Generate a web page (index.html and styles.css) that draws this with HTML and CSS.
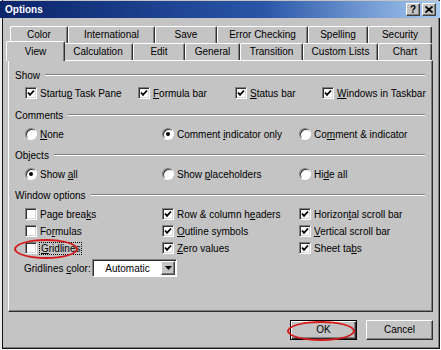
FILE: index.html
```html
<!DOCTYPE html>
<html lang="en">

<head>
    <meta charset="UTF-8">
    <title>Options</title>
    <link rel="stylesheet" href="styles.css">
</head>

<body>
    <div class="dialog">
        <div class="titlebar">
            <span class="title">Options</span>
            <div class="caption_btns">
                <span class="cap_btn help">?</span>
                <span class="cap_btn close">
                    <svg width="8" height="7" viewBox="0 0 8 7"><path d="M0.5 0.5 L7.5 6.5 M7.5 0.5 L0.5 6.5" stroke="#000" stroke-width="1.8"/></svg>
                </span>
            </div>
        </div>

        <div class="tabs">
            <div class="tab_row back">
                <div class="tab">Color</div>
                <div class="tab">International</div>
                <div class="tab">Save</div>
                <div class="tab">Error Checking</div>
                <div class="tab">Spelling</div>
                <div class="tab">Security</div>
            </div>
            <div class="tab_row front">
                <div class="tab active">View</div>
                <div class="tab">Calculation</div>
                <div class="tab">Edit</div>
                <div class="tab">General</div>
                <div class="tab">Transition</div>
                <div class="tab">Custom Lists</div>
                <div class="tab">Chart</div>
            </div>
        </div>

        <div class="panel">
            <!-- Show -->
            <div class="group_title"><span>Show</span><i class="rule"></i></div>
            <div class="opts show_opts">
                <label class="opt"><span class="check"><svg width="10" height="10" viewBox="0 0 10 10"><path d="M2 4.5 L4 6.8 L8 2.5" fill="none" stroke="#000" stroke-width="1.8"/></svg></span><span>Startu<u>p</u> Task Pane</span></label>
                <label class="opt"><span class="check"><svg width="10" height="10" viewBox="0 0 10 10"><path d="M2 4.5 L4 6.8 L8 2.5" fill="none" stroke="#000" stroke-width="1.8"/></svg></span><span><u>F</u>ormula bar</span></label>
                <label class="opt"><span class="check"><svg width="10" height="10" viewBox="0 0 10 10"><path d="M2 4.5 L4 6.8 L8 2.5" fill="none" stroke="#000" stroke-width="1.8"/></svg></span><span><u>S</u>tatus bar</span></label>
                <label class="opt"><span class="check"><svg width="10" height="10" viewBox="0 0 10 10"><path d="M2 4.5 L4 6.8 L8 2.5" fill="none" stroke="#000" stroke-width="1.8"/></svg></span><span><u>W</u>indows in Taskbar</span></label>
            </div>

            <!-- Comments -->
            <div class="group_title gap_big"><span>Comments</span><i class="rule"></i></div>
            <div class="opts radio_opts">
                <label class="opt"><span class="radio"></span><span><u>N</u>one</span></label>
                <label class="opt"><span class="radio on"></span><span>Comment <u>i</u>ndicator only</span></label>
                <label class="opt"><span class="radio"></span><span>Co<u>m</u>ment &amp; indicator</span></label>
            </div>

            <!-- Objects -->
            <div class="group_title"><span>Objects</span><i class="rule"></i></div>
            <div class="opts radio_opts">
                <label class="opt"><span class="radio on"></span><span>Show <u>a</u>ll</span></label>
                <label class="opt"><span class="radio"></span><span>Show <u>p</u>laceholders</span></label>
                <label class="opt"><span class="radio"></span><span>Hi<u>d</u>e all</span></label>
            </div>

            <!-- Window options -->
            <div class="group_title"><span>Window options</span><i class="rule"></i></div>
            <div class="opts win_opts">
                <label class="opt"><span class="check"></span><span>Page brea<u>k</u>s</span></label>
                <label class="opt"><span class="check"><svg width="10" height="10" viewBox="0 0 10 10"><path d="M2 4.5 L4 6.8 L8 2.5" fill="none" stroke="#000" stroke-width="1.8"/></svg></span><span>Row &amp; column h<u>e</u>aders</span></label>
                <label class="opt"><span class="check"><svg width="10" height="10" viewBox="0 0 10 10"><path d="M2 4.5 L4 6.8 L8 2.5" fill="none" stroke="#000" stroke-width="1.8"/></svg></span><span>Horizon<u>t</u>al scroll bar</span></label>

                <label class="opt"><span class="check"></span><span>Fo<u>r</u>mulas</span></label>
                <label class="opt"><span class="check"><svg width="10" height="10" viewBox="0 0 10 10"><path d="M2 4.5 L4 6.8 L8 2.5" fill="none" stroke="#000" stroke-width="1.8"/></svg></span><span><u>O</u>utline symbols</span></label>
                <label class="opt"><span class="check"><svg width="10" height="10" viewBox="0 0 10 10"><path d="M2 4.5 L4 6.8 L8 2.5" fill="none" stroke="#000" stroke-width="1.8"/></svg></span><span><u>V</u>ertical scroll bar</span></label>

                <label class="opt"><span class="check"></span><span class="focus"><u>G</u>ridlines</span></label>
                <label class="opt"><span class="check"><svg width="10" height="10" viewBox="0 0 10 10"><path d="M2 4.5 L4 6.8 L8 2.5" fill="none" stroke="#000" stroke-width="1.8"/></svg></span><span><u>Z</u>ero values</span></label>
                <label class="opt"><span class="check"><svg width="10" height="10" viewBox="0 0 10 10"><path d="M2 4.5 L4 6.8 L8 2.5" fill="none" stroke="#000" stroke-width="1.8"/></svg></span><span>Sheet ta<u>b</u>s</span></label>
            </div>
            <div class="color_row">
                <span class="color_label">Gridlines <u>c</u>olor:</span>
                <div class="combo">
                    <span class="combo_text">Automatic</span>
                    <span class="combo_btn"><svg width="7" height="4" viewBox="0 0 7 4"><path d="M0 0 H7 L3.5 4 Z" fill="#000"/></svg></span>
                </div>
            </div>
        </div>

        <div class="buttons">
            <div class="btn default">OK</div>
            <div class="btn">Cancel</div>
        </div>

        <!-- red annotation rings -->
        <div class="mark mark_grid"></div>
        <div class="mark mark_ok"></div>
    </div>
</body>

</html>
```

FILE: styles.css
```css
html,body,div,span,label {
    padding: 0;
    margin: 0;
    box-sizing: border-box;
}
body {
    background-color: #fff;
    font-family: "Liberation Sans", Arial, sans-serif;
    font-size: 10px;
    color: #000;
}
.dialog {
    position: relative;
    width: 440px;
    height: 349px;
    background-color: #c4c4c4;
    box-shadow: inset 2px 0 0 #ececec, inset 3px 0 0 #111, inset -1px -1px 0 #111, inset -2px -2px 0 #808080;
    display: flex;
    flex-direction: column;
}
/* title bar */
.titlebar {
    margin-top: 1px;
    height: 17px;
    padding: 0 4px 0 5px;
    display: flex;
    align-items: center;
    justify-content: space-between;
    background: linear-gradient(to right, #0a246a, #2a56a8 60%, #a6caf0);
}
.title {
    color: #fff;
    font-weight: bold;
    font-size: 10px;
}
.caption_btns {
    display: flex;
    gap: 2px;
}
.cap_btn {
    width: 14px;
    height: 13px;
    background-color: #c4c4c4;
    border: 1px solid;
    border-color: #fff #404040 #404040 #fff;
    box-shadow: inset -1px -1px 0 #808080;
    display: flex;
    align-items: center;
    justify-content: center;
    font-weight: bold;
    font-size: 10px;
    line-height: 11px;
}
/* tabs */
.tabs {
    margin-top: 8px;
    padding-right: 8px;
}
.tab_row {
    display: flex;
    height: 17px;
}
.tab_row.back {
    padding-left: 10px;
}
.tab_row.front {
    padding-left: 8px;
}
.tab {
    flex: none;
    height: 17px;
    text-align: center;
    line-height: 16px;
    white-space: nowrap;
    background-color: #c4c4c4;
    border-top: 1px solid #fff;
    border-left: 1px solid #fff;
    border-right: 1px solid #303030;
    border-radius: 2px 2px 0 0;
    box-shadow: inset -1px 0 0 #808080;
}
.back .tab:nth-child(1) { width: 58px; }
.back .tab:nth-child(2) { width: 87px; }
.back .tab:nth-child(3) { width: 62px; }
.back .tab:nth-child(4) { width: 91px; }
.back .tab:nth-child(5) { width: 60px; }
.back .tab:nth-child(6) { width: 64px; }
.front .tab:nth-child(1) { width: 59px; }
.front .tab:nth-child(2) { width: 70px; }
.front .tab:nth-child(3) { width: 52px; }
.front .tab:nth-child(4) { width: 55px; }
.front .tab:nth-child(5) { width: 63px; }
.front .tab:nth-child(6) { width: 75px; }
.front .tab:nth-child(7) { width: 54px; }
.tab.active {
    position: relative;
    z-index: 1;
    height: 20px;
    margin: -2px -2px -1px -2px;
    padding-top: 2px;
}
/* main panel */
.panel {
    height: 252px;
    margin: 0 7px 0 8px;
    padding: 7px 7px 0 6px;
    border-top: 1px solid #fff;
    border-left: 1px solid #fff;
    border-right: 1px solid #303030;
    border-bottom: 1px solid #303030;
    box-shadow: inset -1px -1px 0 #808080;
}
.group_title {
    display: flex;
    align-items: center;
    height: 14px;
    margin-top: 7px;
}
.group_title:first-child {
    margin-top: 0;
}
.group_title.gap_big {
    margin-top: 8px;
}
.rule {
    flex: 1;
    height: 0;
    margin-left: 5px;
    border-top: 1px solid #808080;
    border-bottom: 1px solid #fff;
}
.opts {
    display: grid;
    grid-auto-rows: 14px;
    row-gap: 3px;
    margin-top: 4px;
    padding-left: 10px;
}
.radio_opts {
    margin-top: 5px;
    grid-template-columns: 137px 137px auto;
}
.show_opts {
    grid-template-columns: 113px 97px 87px auto;
}
.win_opts {
    margin-top: 5px;
    grid-template-columns: 137px 137px auto;
}
.opt {
    display: flex;
    align-items: center;
    gap: 3px;
    white-space: nowrap;
}
.check {
    width: 12px;
    height: 12px;
    flex: none;
    background-color: #fff;
    border: 1px solid;
    border-color: #808080 #fff #fff #808080;
    box-shadow: inset 1px 1px 0 #303030, inset -1px -1px 0 #d8d8d8;
    display: flex;
    align-items: center;
    justify-content: center;
}
.radio {
    width: 12px;
    height: 12px;
    flex: none;
    border-radius: 50%;
    background-color: #fff;
    border: 1px solid;
    border-color: #808080 #fff #fff #808080;
    box-shadow: inset 1px 1px 0 #303030;
    display: flex;
    align-items: center;
    justify-content: center;
}
.radio.on::after {
    content: "";
    width: 4px;
    height: 4px;
    border-radius: 50%;
    background-color: #000;
}
.focus {
    outline: 1px dotted #000;
    padding: 0 1px;
}
.color_row {
    display: flex;
    align-items: center;
    margin-top: 4px;
    padding-left: 9px;
    gap: 5px;
}
.color_label {
    width: 63px;
    white-space: nowrap;
}
.combo {
    display: flex;
    width: 85px;
    height: 18px;
    background-color: #fff;
    border: 1px solid;
    border-color: #808080 #fff #fff #808080;
    box-shadow: inset 1px 1px 0 #303030;
    padding: 1px 1px 1px 1px;
}
.combo_text {
    flex: 1;
    text-align: center;
    line-height: 15px;
}
.combo_btn {
    width: 14px;
    background-color: #c4c4c4;
    border: 1px solid;
    border-color: #fff #404040 #404040 #fff;
    box-shadow: inset -1px -1px 0 #808080;
    display: flex;
    align-items: center;
    justify-content: center;
}
/* OK / Cancel */
.buttons {
    display: flex;
    justify-content: flex-end;
    gap: 9px;
    margin-top: 8px;
    padding-right: 7px;
}
.btn {
    width: 67px;
    height: 20px;
    text-align: center;
    line-height: 18px;
    border: 1px solid;
    border-color: #fff #303030 #303030 #fff;
    box-shadow: inset -1px -1px 0 #808080;
}
.btn.default {
    border-color: #000;
    box-shadow: inset 1px 1px 0 #fff, inset -1px -1px 0 #303030, inset -2px -2px 0 #808080;
}
.mark {
    position: absolute;
    border: 2px solid #d41a1a;
    border-radius: 50%;
}
.mark_grid {
    left: 14px;
    top: 239px;
    width: 64px;
    height: 20px;
}
.mark_ok {
    left: 287px;
    top: 321px;
    width: 68px;
    height: 20px;
}
```
